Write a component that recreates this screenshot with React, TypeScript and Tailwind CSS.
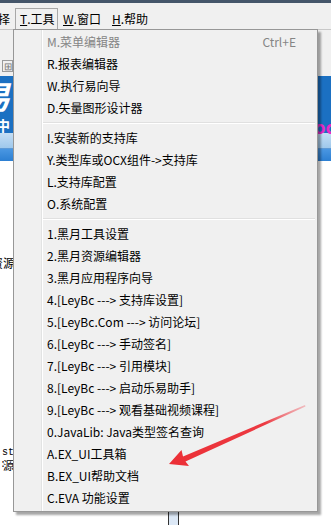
const items: (string | { t: string; s?: string; d?: boolean } | null)[] = [
  { t: 'M.菜单编辑器', s: 'Ctrl+E', d: true },
  'R.报表编辑器',
  'W.执行易向导',
  'D.矢量图形设计器',
  null,
  'I.安装新的支持库',
  'Y.类型库或OCX组件->支持库',
  'L.支持库配置',
  'O.系统配置',
  null,
  '1.黑月工具设置',
  '2.黑月资源编辑器',
  '3.黑月应用程序向导',
  '4.[LeyBc ---> 支持库设置]',
  '5.[LeyBc.Com ---> 访问论坛]',
  '6.[LeyBc ---> 手动签名]',
  '7.[LeyBc ---> 引用模块]',
  '8.[LeyBc ---> 启动乐易助手]',
  '9.[LeyBc ---> 观看基础视频课程]',
  '0.JavaLib: Java类型签名查询',
  'A.EX_UI工具箱',
  'B.EX_UI帮助文档',
  'C.EVA 功能设置',
]

export default function App() {
  return (
    <div className="relative w-[331px] h-[526px] overflow-hidden bg-white text-[12px] text-black font-['Noto_Sans_CJK_SC',sans-serif]">
      {/* window title strip */}
      <div className="h-[3px] bg-[#45566a]" />

      {/* menu bar */}
      <div className="flex h-[26px] items-end bg-[#f0f0f0]">
        <div className="flex h-[21px] w-[15px] items-center">
          <span className="-ml-[2px]">择</span>
        </div>
        <div className="flex h-[21px] w-[43px] items-center border border-b-0 border-[#a8a8a8] pl-[4px]">
          <span className="underline">T</span>.工具
        </div>
        <div className="flex h-[21px] w-[54px] items-center pl-[5px]">
          <span className="underline">W</span>.窗口
        </div>
        <div className="flex h-[21px] items-center">
          <span className="underline">H</span>.帮助
        </div>
      </div>

      {/* toolbar area */}
      <div className="h-[47px] border-t border-[#c8c8c8] bg-[#f0f0f0] pt-[30px] pl-[2px]">
        <div className="flex h-[12px] w-[11px] items-center justify-center border border-[#9a9a9a] text-[10px] leading-none text-[#777]">
          ⊞
        </div>
      </div>

      {/* banner */}
      <div className="flex h-[57px] justify-between bg-[#1b70c2] text-white">
        <div className="flex flex-col">
          <span className="-ml-[22px] h-[38px] text-[32px] font-bold italic leading-[38px]">易</span>
          <span className="-ml-[4px] mt-[4px] text-[14px] font-bold leading-[14px]">中</span>
        </div>
        <span className="mt-[42px] -mr-[4px] text-[18px] font-bold leading-[16px] text-[#e82ac8]">oc</span>
      </div>
      <div className="h-[15px] bg-gradient-to-b from-[#c4def4] to-[#9fc8ec]" />
      <div className="h-px bg-[#5e9ad6]" />
      <div className="h-[12px] bg-gradient-to-b from-[#4a97e2] to-[#2c7fd2]" />

      {/* code area */}
      <div className="pt-[93px]">
        <span className="-ml-[9px] inline-block">资源</span>
      </div>
      <div className="mt-[176px] font-['Liberation_Mono',monospace] text-[10px] leading-[10px]">
        <div className="pl-[2px]">st</div>
        <div className="mt-[2px] flex items-center">
          <span className="tracking-[-3px]">: </span>
          <span className="font-['Noto_Sans_CJK_SC',sans-serif] text-[11px]">源</span>
        </div>
      </div>
      <div className="ml-[168px] mt-[42px] h-[13px] w-[11px] border-x border-[#333] bg-[#dce8f6]" />

      {/* dropdown menu */}
      <div className="absolute left-[13px] top-[29px] flex h-[483px] w-[305px] border border-[#979797] bg-[#f0f0f0] shadow-[3px_3px_2px_rgba(0,0,0,0.35)]">
        <div className="w-[28px] border-r border-[#e2e3e3]" />
        <div className="flex flex-1 flex-col border-l border-white pt-[1px]">
          {items.map((it, i) => {
            if (it === null) {
              return (
                <div key={i} className="h-[8px] pt-[3px] pr-[2px]">
                  <div className="h-px bg-[#e0e0e0]" />
                  <div className="h-px bg-white" />
                </div>
              )
            }
            const o = typeof it === 'string' ? { t: it } : it
            return (
              <div
                key={i}
                className={`flex h-[22px] items-center justify-between whitespace-pre pl-[4px] pr-[21px] ${o.d ? 'text-[#858585]' : 'text-black'}`}
              >
                <span>{o.t}</span>
                {o.s && <span>{o.s}</span>}
              </div>
            )
          })}
        </div>
      </div>

      {/* red annotation arrow */}
      <svg className="pointer-events-none absolute left-0 top-0" width="331" height="526" viewBox="0 0 331 526">
        <defs>
          <linearGradient id="ag" x1="169" y1="464" x2="306" y2="405" gradientUnits="userSpaceOnUse">
            <stop offset="0" stopColor="#ec2f36" />
            <stop offset="0.7" stopColor="#ec3a42" />
            <stop offset="1" stopColor="#f07078" stopOpacity="0.4" />
          </linearGradient>
        </defs>
        <polygon
          points="169,464 189,466 185.5,461.5 305.5,406.5 305,405 183,456.5 181.5,450"
          fill="url(#ag)"
        />
      </svg>
    </div>
  )
}
